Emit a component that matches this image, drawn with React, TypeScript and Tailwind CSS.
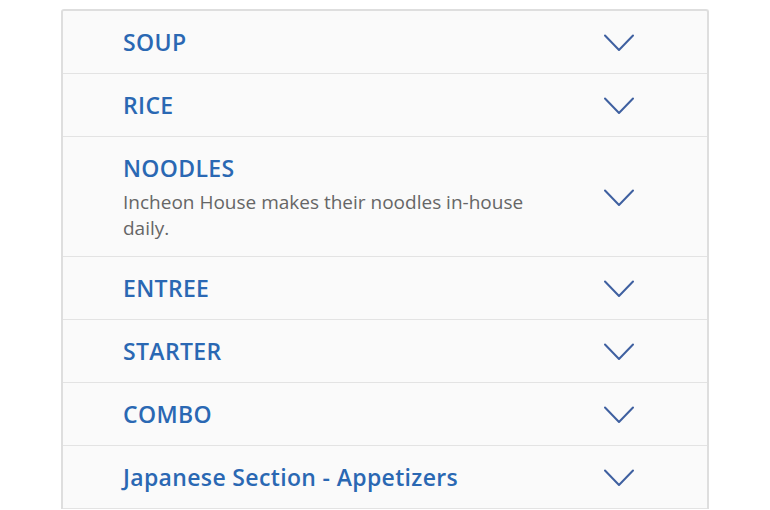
import React from 'react';

type Section = { title: string; note?: string };

const sections: Section[] = [
  { title: 'SOUP' },
  { title: 'RICE' },
  { title: 'NOODLES', note: 'Incheon House makes their noodles in-house daily.' },
  { title: 'ENTREE' },
  { title: 'STARTER' },
  { title: 'COMBO' },
  { title: 'Japanese Section - Appetizers' },
];

const Chevron = () => (
  <svg width="30" height="18" viewBox="0 0 30 18" fill="none" className="mt-[2px] shrink-0">
    <path d="M1 1.5 L15 16 L29 1.5" stroke="#3f60a0" strokeWidth="2" strokeLinecap="round" strokeLinejoin="round" />
  </svg>
);

export default function App() {
  return (
    <div className="min-h-screen bg-white pt-[9px]" style={{ fontFamily: '"Open Sans", "Liberation Sans", sans-serif' }}>
      <div className="mx-auto w-[648px] rounded-t-[3px] border-2 border-b-0 border-[#dedede] bg-[#fafafa]">
        {sections.map((s) => (
          <div
            key={s.title}
            className="flex min-h-[63px] items-center border-b border-[#e3e3e3] py-[15px] pl-[60px] pr-[73px]"
          >
            <div className="flex-1">
              <h3 className="text-[23px] font-semibold leading-[32px] tracking-[0.35px] text-[#2a68b3]">{s.title}</h3>
              {s.note && (
                <p className="mt-[5px] max-w-[430px] text-[19px] leading-[26px] text-[#666666]">{s.note}</p>
              )}
            </div>
            <Chevron />
          </div>
        ))}
      </div>
    </div>
  );
}
